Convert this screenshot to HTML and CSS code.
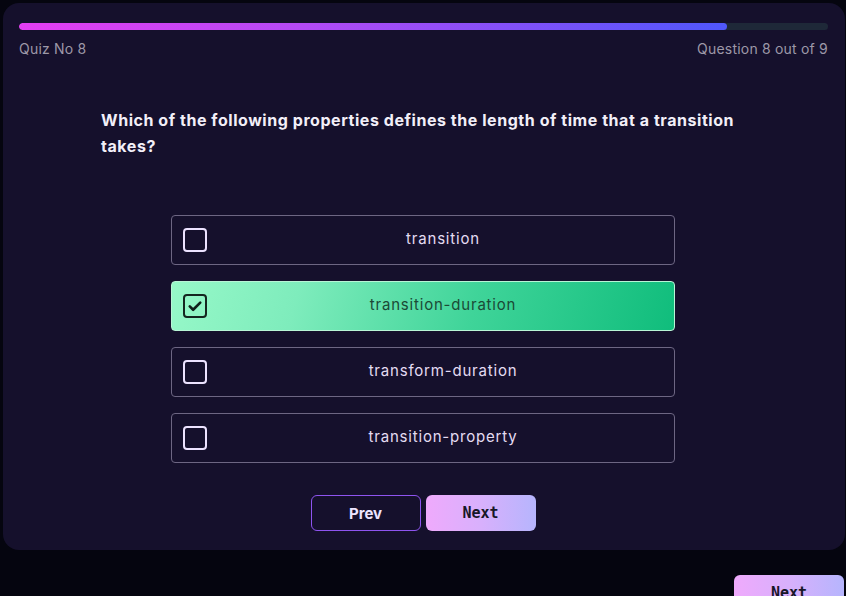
FILE: index.html
```html
<!DOCTYPE html>
<html>
<head>
<meta charset="utf-8">
<link rel="stylesheet" href="styles.css">
</head>
<body>
<div class="card">
  <div class="progress"><div class="progress-fill" style="width: 87.5%"></div></div>
  <div class="meta">
    <span>Quiz No 8</span>
    <span>Question 8 out of 9</span>
  </div>
  <h2 class="question">Which of the following properties defines the length of time that a transition takes?</h2>
  <div class="options">
    <div class="option">
      <span class="box"></span>
      <span class="label">transition</span>
    </div>
    <div class="option selected">
      <span class="box"><svg viewBox="0 0 24 24" width="18" height="18"><path d="M5 12.5l4.5 4.5L19 7.5" fill="none" stroke="#0f1f1a" stroke-width="3.5" stroke-linecap="round" stroke-linejoin="round"/></svg></span>
      <span class="label">transition-duration</span>
    </div>
    <div class="option">
      <span class="box"></span>
      <span class="label">transform-duration</span>
    </div>
    <div class="option">
      <span class="box"></span>
      <span class="label">transition-property</span>
    </div>
  </div>
  <div class="nav">
    <button class="btn prev">Prev</button>
    <button class="btn next">Next</button>
  </div>
</div>
<div class="footer">
  <button class="btn next">Next</button>
</div>
</body>
</html>
```

FILE: styles.css
```css
html, body {
  margin: 0;
  padding: 0;
  background: #05050f;
  height: 100%;
  overflow: hidden;
}
body {
  padding: 3px 2px 0 3px;
  font-family: Inter, "Noto Sans", sans-serif;
  box-sizing: border-box;
}
.card {
  width: 842px;
  height: 547px;
  box-sizing: border-box;
  background: #15102c;
  border-radius: 16px;
  padding: 20px 17px 0 16px;
}
.progress {
  height: 7px;
  border-radius: 4px;
  background: #1e2838;
  overflow: hidden;
}
.progress-fill {
  height: 100%;
  border-radius: 4px;
  background: linear-gradient(90deg, #e53ef2 0%, #b44af5 40%, #4f57fb 100%);
}
.meta {
  display: flex;
  justify-content: space-between;
  margin-top: 10px;
  font-size: 14px;
  line-height: 18px;
  color: #9d98a8;
  letter-spacing: 0.2px;
}
.question {
  margin: 49px 0 0 82px;
  width: 645px;
  font-size: 16px;
  line-height: 26px;
  font-weight: 700;
  color: #f2eff8;
  letter-spacing: 0.55px;
}
.options {
  margin: 56px 0 0 152px;
  width: 504px;
  display: flex;
  flex-direction: column;
  gap: 16px;
}
.option {
  height: 50px;
  box-sizing: border-box;
  border: 1px solid #6d6683;
  border-radius: 4px;
  display: flex;
  align-items: center;
  padding-left: 11px;
}
.box {
  width: 24px;
  height: 24px;
  box-sizing: border-box;
  border: 2px solid #ece2ff;
  border-radius: 4px;
  display: flex;
  align-items: center;
  justify-content: center;
}
.label {
  flex: 1;
  text-align: center;
  font-size: 15px;
  line-height: 18px;
  color: #e4dcf2;
  letter-spacing: 0.8px;
  padding: 0 0 3px 5px;
}
.option.selected {
  border-color: #b8f5d6;
  background: linear-gradient(105deg, #96f8c8 0%, #7eecbc 25%, #3fd499 60%, #10bd7c 100%);
}
.option.selected .box {
  border-color: #14251f;
}
.option.selected .label {
  color: #1b4a36;
}
.nav {
  display: flex;
  justify-content: center;
  gap: 5px;
  margin: 32px 0 0 0;
  padding-right: 1px;
}
.btn {
  width: 110px;
  height: 36px;
  border-radius: 6px;
  font-size: 15px;
  font-weight: 700;
  cursor: pointer;
  padding: 0;
}
.prev {
  background: transparent;
  border: 1px solid #8e54ef;
  color: #ece4ff;
  font-family: Inter, "Noto Sans", sans-serif;
}
.next {
  border: none;
  background: linear-gradient(90deg, #efaafc 0%, #d8b0fc 50%, #b6b5fd 100%);
  color: #171728;
  font-family: "DejaVu Sans Mono", "Liberation Mono", monospace;
}
.footer {
  display: flex;
  justify-content: flex-end;
  margin-top: 25px;
}
```
